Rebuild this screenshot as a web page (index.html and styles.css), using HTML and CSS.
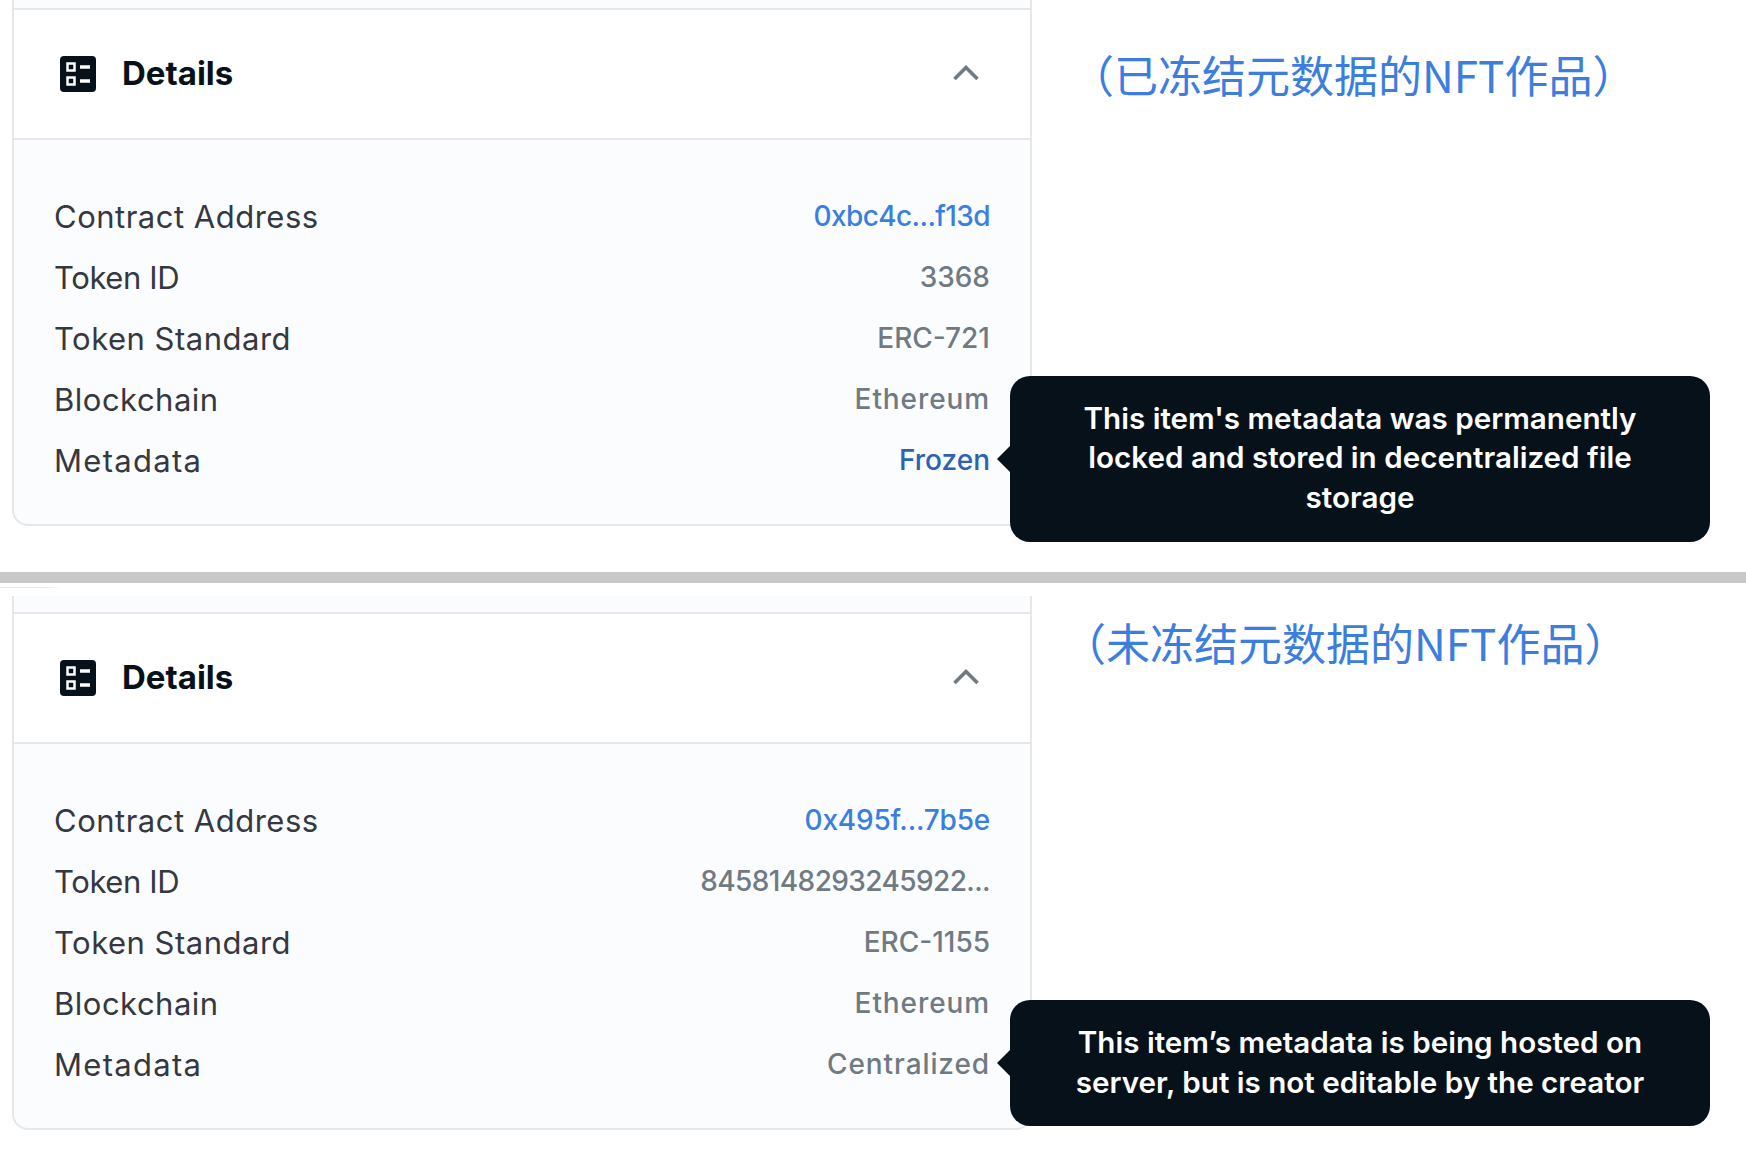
FILE: index.html
```html
<!DOCTYPE html>
<html lang="zh">
<head>
<meta charset="utf-8">
<title>Details</title>
<link rel="stylesheet" href="styles.css">
</head>
<body>
<section class="shot shot-a">
  <div class="card">
    <div class="card-top"></div>
    <div class="card-head">
      <svg class="ico" viewBox="0 0 36 36"><rect width="36" height="36" rx="4" fill="#07111a"/><g fill="none" stroke="#fff" stroke-width="2.5"><rect x="7.5" y="7.5" width="7" height="7"/><rect x="7.5" y="21.5" width="7" height="7"/></g><path d="M20 9.3h10v3.4H20zM20 23.3h10v3.4H20z" fill="#fff"/></svg>
      <span class="head-title">Details</span>
      <svg class="chev" viewBox="0 0 26 26"><path d="M1.5 18L13 6.5 24.5 18" fill="none" stroke="#707a83" stroke-width="3.6"/></svg>
    </div>
    <div class="rows">
      <div class="row"><span class="k">Contract Address</span><span class="v link link-tight">0xbc4c...f13d</span></div>
      <div class="row"><span class="k k-tight">Token ID</span><span class="v">3368</span></div>
      <div class="row"><span class="k">Token Standard</span><span class="v">ERC-721</span></div>
      <div class="row"><span class="k">Blockchain</span><span class="v v-wide">Ethereum</span></div>
      <div class="row"><span class="k k-wide">Metadata</span><span class="v frozen">Frozen</span></div>
    </div>
  </div>
  <p class="note note-a">（已冻结元数据的NFT作品）</p>
  <div class="tip tip-a">This item's metadata was permanently locked and stored in decentralized file storage</div>
</section>
<div class="rule"></div>
<section class="shot shot-b">
  <div class="card">
    <div class="card-top"></div>
    <div class="card-head">
      <svg class="ico" viewBox="0 0 36 36"><rect width="36" height="36" rx="4" fill="#07111a"/><g fill="none" stroke="#fff" stroke-width="2.5"><rect x="7.5" y="7.5" width="7" height="7"/><rect x="7.5" y="21.5" width="7" height="7"/></g><path d="M20 9.3h10v3.4H20zM20 23.3h10v3.4H20z" fill="#fff"/></svg>
      <span class="head-title">Details</span>
      <svg class="chev" viewBox="0 0 26 26"><path d="M1.5 18L13 6.5 24.5 18" fill="none" stroke="#707a83" stroke-width="3.6"/></svg>
    </div>
    <div class="rows">
      <div class="row"><span class="k">Contract Address</span><span class="v link">0x495f...7b5e</span></div>
      <div class="row"><span class="k k-tight">Token ID</span><span class="v v-narrow">8458148293245922...</span></div>
      <div class="row"><span class="k">Token Standard</span><span class="v">ERC-1155</span></div>
      <div class="row"><span class="k">Blockchain</span><span class="v v-wide">Ethereum</span></div>
      <div class="row"><span class="k k-wide">Metadata</span><span class="v v-wide">Centralized</span></div>
    </div>
  </div>
  <p class="note note-b">（未冻结元数据的NFT作品）</p>
  <div class="tip tip-b">This item’s metadata is being hosted on server, but is not editable by the creator</div>
</section>
</body>
</html>
```
FILE: styles.css
```css
* { box-sizing: border-box; }
html, body { margin: 0; padding: 0; background: #fff; }
body { width: 1746px; height: 1161px; overflow: hidden; font-family: "Inter", "Noto Sans", sans-serif; color: #07111a; }
.shot { position: relative; padding-left: 12px; }
.shot-a { height: 572px; }
.shot-b { height: 578px; padding-top: 13px; }
.shot-b::before { content: ""; position: absolute; left: 0; top: 4px; width: 62px; height: 1px; background: linear-gradient(90deg, #fbdde0 70%, #fff); }
.rule { height: 11px; background: #c8c8c8; }
.card { width: 1020px; border: solid #e5e7eb; border-width: 0 2px 2px 2px; border-radius: 0 0 16px 16px; background: #fbfcfe; }
.card-top { height: 8px; border-bottom: 2px solid #e5e7eb; box-sizing: content-box; }
.shot-b .card-top { height: 16px; }
.card-head { display: flex; align-items: center; height: 130px; padding: 0 51px 0 46px; background: #fff; border-bottom: 2px solid #e5e7eb; }
.ico { width: 36px; height: 36px; flex: none; }
.head-title { margin-left: 26px; font-size: 33px; font-weight: 700; position: relative; top: -1px; }
.chev { width: 26px; height: 26px; margin-left: auto; }
.rows { padding: 46px 40px 33px 40px; }
.row { display: flex; justify-content: space-between; align-items: center; height: 61px; }
.k { font-size: 31px; letter-spacing: .5px; color: #353840; }
.k-tight { letter-spacing: -.4px; }
.k-wide { letter-spacing: 1.3px; }
.v { font-size: 28px; font-weight: 500; color: #707a83; position: relative; top: -1px; }
.v-wide { letter-spacing: .9px; }
.v-narrow { letter-spacing: -.6px; }
.link { color: #3a7fe0; letter-spacing: -.2px; }
.link-tight { letter-spacing: -.6px; }
.frozen { color: #2b62b5; }
.note { position: absolute; margin: 0; font-family: "Noto Sans CJK SC", sans-serif; font-size: 44px; line-height: 60px; color: #3c7de0; white-space: nowrap; }
.note-a { left: 1070px; top: 44px; }
.note-b { left: 1062px; top: 29px; }
.tip { position: absolute; left: 1010px; width: 700px; display: flex; align-items: center; justify-content: center; padding: 0 60px; border-radius: 20px; background: #07111a; color: #fff; font-size: 29.6px; font-weight: 600; line-height: 39.5px; text-align: center; }
.tip::before { content: ""; position: absolute; left: -13px; top: 50%; width: 14px; height: 28px; margin-top: -14px; background: #07111a; clip-path: polygon(0 50%, 100% 0, 100% 100%); }
.tip-a { top: 376px; height: 166px; padding-bottom: 2px; }
.tip-b { top: 417px; height: 126px; padding-bottom: 1px; }
```
